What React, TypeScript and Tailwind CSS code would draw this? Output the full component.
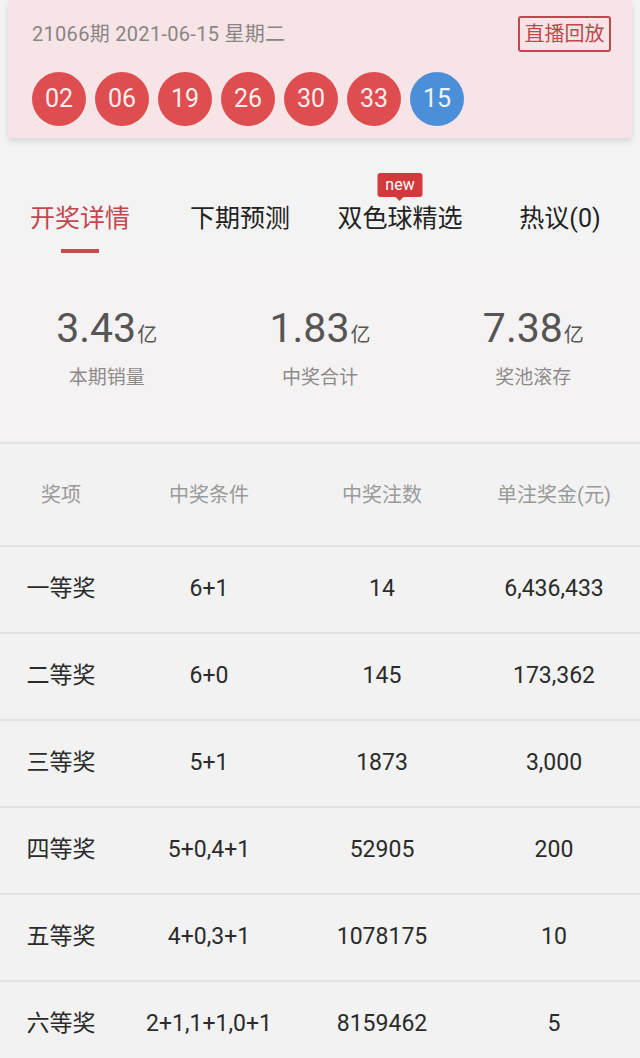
import React from "react";

const font = { fontFamily: "Roboto, 'Noto Sans CJK SC', 'Noto Sans', sans-serif" };

const reds = ["02", "06", "19", "26", "30", "33"];

const stats = [
  { v: "3.43", l: "本期销量" },
  { v: "1.83", l: "中奖合计" },
  { v: "7.38", l: "奖池滚存" },
];

const rows = [
  ["一等奖", "6+1", "14", "6,436,433"],
  ["二等奖", "6+0", "145", "173,362"],
  ["三等奖", "5+1", "1873", "3,000"],
  ["四等奖", "5+0,4+1", "52905", "200"],
  ["五等奖", "4+0,3+1", "1078175", "10"],
  ["六等奖", "2+1,1+1,0+1", "8159462", "5"],
];

const cols = "grid grid-cols-[122px_174px_172px_172px]";

export default function App() {
  return (
    <div style={font} className="w-[640px] h-[1058px] overflow-hidden bg-[#f3f3f3]">
      {/* top card */}
      <div className="mx-2 bg-[#f6e4e6] pl-6 pr-[21px] pt-4 pb-3 shadow-[0_3px_6px_rgba(0,0,0,0.12)]">
        <div className="flex items-center justify-between h-9">
          <span className="text-[20px] text-[#8a8585] tracking-[0.3px]">21066期 2021-06-15 星期二</span>
          <span className="h-9 w-[93px] flex items-center justify-center border-2 border-[#c2474d] rounded-[3px] text-[20px] text-[#c2474d]">
            直播回放
          </span>
        </div>
        <div className="flex gap-[9px] mt-5">
          {reds.map((n) => (
            <div
              key={n}
              className="w-[54px] h-[54px] rounded-full bg-[#de4d4f] flex items-center justify-center text-[25px] text-[#fdeeee]"
            >
              {n}
            </div>
          ))}
          <div className="w-[54px] h-[54px] rounded-full bg-[#4a8fd8] flex items-center justify-center text-[25px] text-[#eef5fd]">
            15
          </div>
        </div>
      </div>

      {/* tabs */}
      <div className="grid grid-cols-4 pt-[65px]">
        <div className="flex flex-col items-center">
          <span className="text-[25px] leading-8 text-[#c2474f]">开奖详情</span>
          <span className="mt-[14px] h-1 w-[38px] bg-[#c9484e]"></span>
        </div>
        <div className="flex flex-col items-center">
          <span className="text-[25px] leading-8 text-[#222]">下期预测</span>
        </div>
        <div className="flex flex-col items-center">
          <span className="relative text-[25px] leading-8 text-[#222]">
            双色球精选
            <span className="absolute left-1/2 -translate-x-1/2 -top-[30px] w-[45px] h-6 bg-[#d2393b] rounded-[3px] flex items-center justify-center text-[16px] leading-none text-white">
              new
              <span className="absolute -bottom-[4px] left-1/2 -translate-x-1/2 w-0 h-0 border-l-[4px] border-r-[4px] border-t-[4px] border-l-transparent border-r-transparent border-t-[#d2393b]"></span>
            </span>
          </span>
        </div>
        <div className="flex flex-col items-center">
          <span className="text-[25px] leading-8 text-[#222]">热议(0)</span>
        </div>
      </div>

      {/* stats */}
      <div className="grid grid-cols-3 pt-[51px] pb-[50px] bg-[#f4f2f2]">
        {stats.map((s) => (
          <div key={s.l} className="flex flex-col items-center">
            <div className="h-12 flex items-end text-[#555]">
              <span className="text-[41px] leading-[48px]">{s.v}</span>
              <span className="text-[20px] leading-[34px] ml-[1px]">亿</span>
            </div>
            <span className="mt-3 text-[19px] leading-7 text-[#8e8a8a]">{s.l}</span>
          </div>
        ))}
      </div>
      <div className="h-[2px] bg-[#e3e3e3]"></div>

      {/* table */}
      <div className="bg-[#f2f2f2]">
        <div className={`${cols} h-[101px] items-center text-[20px] text-[#9a9a9a]`}>
          <span className="text-center">奖项</span>
          <span className="text-center">中奖条件</span>
          <span className="text-center">中奖注数</span>
          <span className="text-center">单注奖金(元)</span>
        </div>
        {rows.map((r) => (
          <div
            key={r[0]}
            className={`${cols} h-[87px] items-center border-t-2 border-[#e2e2e2] text-[23px] text-[#2b2b2b]`}
          >
            <span className="text-center">{r[0]}</span>
            <span className="text-center">{r[1]}</span>
            <span className="text-center">{r[2]}</span>
            <span className="text-center">{r[3]}</span>
          </div>
        ))}
      </div>
    </div>
  );
}
